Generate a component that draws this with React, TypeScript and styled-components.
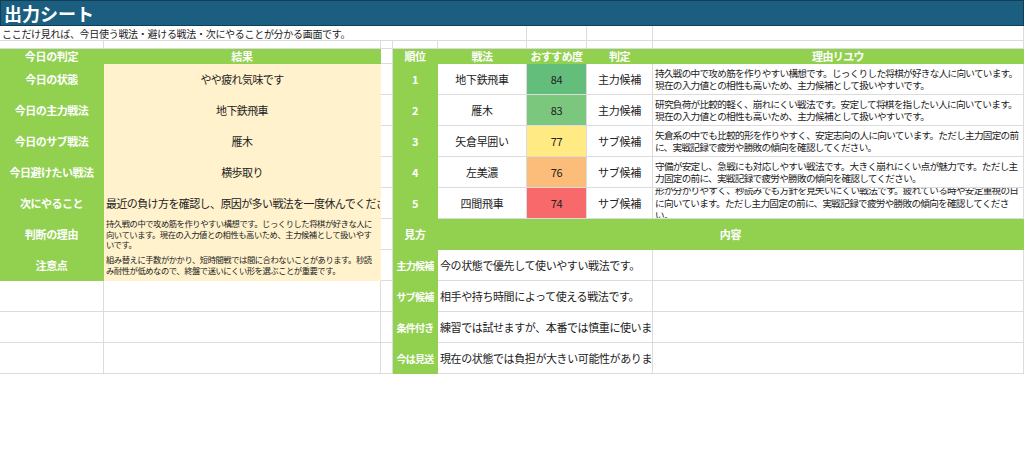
import React from "react";
import styled, { createGlobalStyle } from "styled-components";

const GREEN = "#92d050";
const CREAM = "#fff2cc";
const LINE = "#dcdcdc";

const Global = createGlobalStyle`
  html, body { margin: 0; padding: 0; background: #fff; }
  body { font-family: "Noto Sans CJK JP", "Noto Sans", sans-serif; color: #222; }
`;

const Sheet = styled.div`
  display: grid;
  grid-template-columns: 104px 277px 12px 45px 89px 60px 66px 1fr;
  grid-template-rows: 26px 15px 8px 15px repeat(10, 31px);
  width: 1024px;
`;

type CellProps = {
  $c: string;
  $r: string;
  $bg?: string;
  $fg?: string;
  $align?: "left" | "center";
  $size?: number;
  $bold?: boolean;
  $line?: boolean;
  $tight?: number;
  $nowrap?: boolean;
};

const Cell = styled.div<CellProps>`
  grid-column: ${(p) => p.$c};
  grid-row: ${(p) => p.$r};
  background: ${(p) => p.$bg ?? "#fff"};
  color: ${(p) => p.$fg ?? "#222"};
  font-size: ${(p) => p.$size ?? 11}px;
  font-weight: ${(p) => (p.$bold ? 700 : 400)};
  letter-spacing: ${(p) => p.$tight ?? -0.3}px;
  white-space: ${(p) => (p.$nowrap ? "nowrap" : "normal")};
  line-height: 1.3;
  display: flex;
  align-items: center;
  justify-content: ${(p) => (p.$align === "left" ? "flex-start" : "center")};
  text-align: ${(p) => p.$align ?? "center"};
  padding: 0 2px;
  box-sizing: border-box;
  overflow: hidden;
  border-right: 1px solid ${(p) => (p.$line === false ? "transparent" : LINE)};
  border-bottom: 1px solid ${(p) => (p.$line === false ? "transparent" : LINE)};
`;

const Title = styled.div`
  grid-column: 1 / -1;
  grid-row: 1;
  background: #1b5e80;
  color: #fff;
  font-size: 18px;
  font-weight: 700;
  display: flex;
  align-items: center;
  padding-left: 3px;
  border: 1px solid #0f3f58;
`;

const leftRows = [
  { k: "今日の状態", v: "やや疲れ気味です" },
  { k: "今日の主力戦法", v: "地下鉄飛車" },
  { k: "今日のサブ戦法", v: "雁木" },
  { k: "今日避けたい戦法", v: "横歩取り" },
  { k: "次にやること", v: "最近の負け方を確認し、原因が多い戦法を一度休んでください。", left: true },
];

const notes = [
  { k: "判断の理由", v: "持久戦の中で攻め筋を作りやすい構想です。じっくりした将棋が好きな人に向いています。現在の入力値との相性も高いため、主力候補として扱いやすいです。" },
  { k: "注意点", v: "組み替えに手数がかかり、短時間戦では間に合わないことがあります。秒読み耐性が低めなので、終盤で迷いにくい形を選ぶことが重要です。" },
];

const ranks = [
  { n: 1, name: "地下鉄飛車", s: 84, bg: "#63be7b", j: "主力候補", r: "持久戦の中で攻め筋を作りやすい構想です。じっくりした将棋が好きな人に向いています。現在の入力値との相性も高いため、主力候補として扱いやすいです。" },
  { n: 2, name: "雁木", s: 83, bg: "#7cc77e", j: "主力候補", r: "研究負荷が比較的軽く、崩れにくい戦法です。安定して将棋を指したい人に向いています。現在の入力値との相性も高いため、主力候補として扱いやすいです。" },
  { n: 3, name: "矢倉早囲い", s: 77, bg: "#ffea84", j: "サブ候補", r: "矢倉系の中でも比較的形を作りやすく、安定志向の人に向いています。ただし主力固定の前に、実戦記録で疲労や勝敗の傾向を確認してください。" },
  { n: 4, name: "左美濃", s: 76, bg: "#fcbd7b", j: "サブ候補", r: "守備が安定し、急戦にも対応しやすい戦法です。大きく崩れにくい点が魅力です。ただし主力固定の前に、実戦記録で疲労や勝敗の傾向を確認してください。" },
  { n: 5, name: "四間飛車", s: 74, bg: "#f8696b", j: "サブ候補", r: "形が分かりやすく、秒読みでも方針を見失いにくい戦法です。疲れている時や安定重視の日に向いています。ただし主力固定の前に、実戦記録で疲労や勝敗の傾向を確認してください。" },
];

const legend = [
  { k: "主力候補", v: "今の状態で優先して使いやすい戦法です。" },
  { k: "サブ候補", v: "相手や持ち時間によって使える戦法です。" },
  { k: "条件付き", v: "練習では試せますが、本番では慎重に使います。" },
  { k: "今は見送", v: "現在の状態では負担が大きい可能性があります。" },
];

export default function App() {
  const blanks: React.ReactNode[] = [];
  for (let r = 2; r <= 14; r++)
    for (let c = 1; c <= 8; c++)
      blanks.push(<Cell key={`b${r}-${c}`} $c={`${c}`} $r={`${r}`} />);

  return (
    <>
      <Global />
      <Sheet>
        {blanks}
        <Title>出力シート</Title>
        <Cell $c="1 / 6" $r="2" $align="left" $size={10} $nowrap>
          ここだけ見れば、今日使う戦法・避ける戦法・次にやることが分かる画面です。
        </Cell>

        <Cell $c="1" $r="4" $bg={GREEN} $fg="#fff" $bold $line={false}>今日の判定</Cell>
        <Cell $c="2" $r="4" $bg={GREEN} $fg="#fff" $bold $line={false}>結果</Cell>
        {leftRows.map((x, i) => (
          <React.Fragment key={x.k}>
            <Cell $c="1" $r={`${5 + i}`} $bg={GREEN} $fg="#fff" $bold $nowrap $tight={-0.5} $line={false}>{x.k}</Cell>
            <Cell $c="2" $r={`${5 + i}`} $bg={CREAM} $align={x.left ? "left" : "center"} $nowrap $tight={-0.6} $line={false}>{x.v}</Cell>
          </React.Fragment>
        ))}
        {notes.map((x, i) => (
          <React.Fragment key={x.k}>
            <Cell $c="1" $r={`${10 + i}`} $bg={GREEN} $fg="#fff" $bold $line={false}>{x.k}</Cell>
            <Cell $c="2" $r={`${10 + i}`} $bg={CREAM} $align="left" $size={8.3} $tight={-0.45} $line={false}>{x.v}</Cell>
          </React.Fragment>
        ))}

        {["順位", "戦法", "おすすめ度", "判定", "理由リユウ"].map((h, i) => (
          <Cell key={h} $c={`${4 + i}`} $r="4" $bg={GREEN} $fg="#fff" $bold $nowrap $tight={-0.6} $line={false}>{h}</Cell>
        ))}
        {ranks.map((x, i) => (
          <React.Fragment key={x.n}>
            <Cell $c="4" $r={`${5 + i}`} $bg={GREEN} $fg="#fff" $bold $line={false}>{x.n}</Cell>
            <Cell $c="5" $r={`${5 + i}`}>{x.name}</Cell>
            <Cell $c="6" $r={`${5 + i}`} $bg={x.bg}>{x.s}</Cell>
            <Cell $c="7" $r={`${5 + i}`} $nowrap>{x.j}</Cell>
            <Cell $c="8" $r={`${5 + i}`} $align="left" $size={9.6} $tight={-0.7}>{x.r}</Cell>
          </React.Fragment>
        ))}
        <Cell $c="4" $r="10" $bg={GREEN} $fg="#fff" $bold $line={false}>見方</Cell>
        <Cell $c="5 / 9" $r="10" $bg={GREEN} $fg="#fff" $bold $line={false}>内容</Cell>
        {legend.map((x, i) => (
          <React.Fragment key={x.k}>
            <Cell $c="4" $r={`${11 + i}`} $bg={GREEN} $fg="#fff" $bold $size={10} $nowrap $tight={-0.8} $line={false}>{x.k}</Cell>
            <Cell $c="5 / 8" $r={`${11 + i}`} $align="left" $nowrap $tight={-0.4}>{x.v}</Cell>
          </React.Fragment>
        ))}
      </Sheet>
    </>
  );
}
